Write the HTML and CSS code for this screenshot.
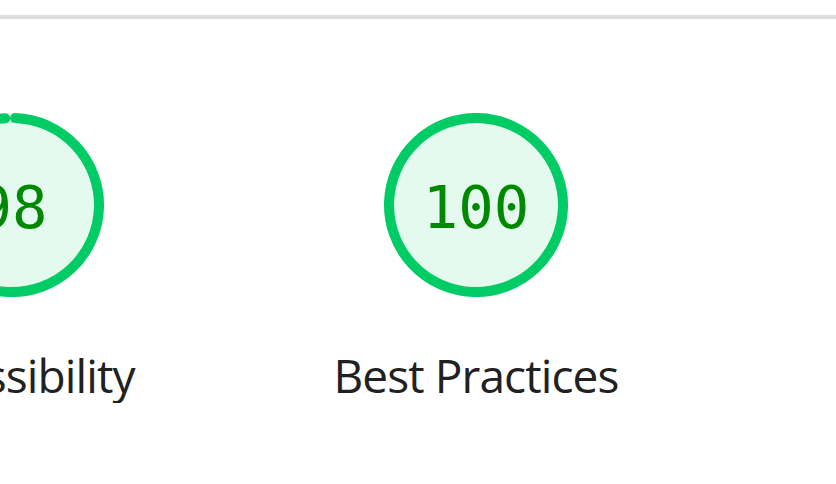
FILE: index.html
```html
<!DOCTYPE html>
<html lang="en">
<head>
  <meta charset="UTF-8">
  <meta name="viewport" content="width=device-width, initial-scale=1.0">
  <title>Lighthouse Report</title>
  <link rel="stylesheet" href="styles.css">
</head>
<body>

  <div class="topbar"></div>

  <div class="scores">
    <!-- Accessibility: 98 -->
    <div class="gauge">
      <svg class="gauge-svg" viewBox="0 0 184 184" width="184" height="184">
        <circle class="gauge-base" cx="92" cy="92" r="87"></circle>
        <circle class="gauge-arc" cx="92" cy="92" r="87" stroke-dasharray="535.8 546.7"></circle>
      </svg>
      <div class="gauge-value">98</div>
      <div class="gauge-label">Accessibility</div>
    </div>

    <!-- Best Practices: 100 -->
    <div class="gauge">
      <svg class="gauge-svg" viewBox="0 0 184 184" width="184" height="184">
        <circle class="gauge-base" cx="92" cy="92" r="87"></circle>
        <circle class="gauge-arc" cx="92" cy="92" r="87" stroke-dasharray="546.7 546.7"></circle>
      </svg>
      <div class="gauge-value">100</div>
      <div class="gauge-label">Best Practices</div>
    </div>
  </div>

</body>
</html>
```

FILE: styles.css
```css
body {
  margin: 0;
  background: #fff;
  color: #212121;
  font-family: 'Open Sans', 'Noto Sans', sans-serif;
  overflow: hidden;
}

.topbar {
  height: 15px;
  border-bottom: 4px solid #dcdde0;
}

.scores {
  display: flex;
  gap: 164px;
  margin-left: -138px;
  padding-top: 94px;
}

.gauge {
  position: relative;
  width: 300px;
  flex-shrink: 0;
  display: flex;
  flex-direction: column;
  align-items: center;
}

.gauge-svg {
  display: block;
}

.gauge-base {
  fill: rgba(0, 204, 102, 0.1);
  stroke: rgba(0, 204, 102, 0.1);
  stroke-width: 10;
}

.gauge-arc {
  fill: none;
  stroke: #00cc66;
  stroke-width: 10;
  stroke-linecap: round;
  transform: rotate(-88deg);
  transform-origin: 50% 50%;
}

/* score sits over the middle of the ring */
.gauge-value {
  position: absolute;
  top: 2px;
  left: 0;
  right: 0;
  height: 184px;
  display: flex;
  align-items: center;
  justify-content: center;
  font-family: 'DejaVu Sans Mono', monospace;
  font-size: 59px;
  color: #008800;
}

.gauge-label {
  margin-top: 51px;
  font-size: 46px;
  line-height: 1.2;
  letter-spacing: -0.9px;
  white-space: nowrap;
}
```
